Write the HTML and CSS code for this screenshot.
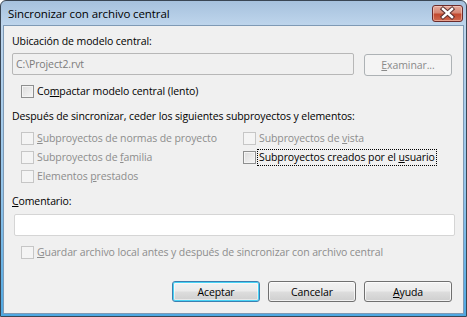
FILE: index.html
```html
<!DOCTYPE html>
<html lang="es">
  <head>
    <meta charset="UTF-8" />
    <title>Sincronizar con archivo central</title>
    <link rel="stylesheet" href="styles.css">
  </head>
  <body>
    <div class="window">
      <div class="titlebar">
        <span class="title">Sincronizar con archivo central</span>
        <span class="close">
          <svg viewBox="0 0 31 17" width="31" height="17">
            <path d="M11 4 L20 12 M20 4 L11 12" stroke="#5a3030" stroke-width="4.4" stroke-linecap="square" />
            <path d="M11 4 L20 12 M20 4 L11 12" stroke="#fff" stroke-width="2.4" stroke-linecap="square" />
          </svg>
        </span>
      </div>

      <div class="client">
        <div class="label">Ubicación de modelo central:</div>
        <div class="path-row">
          <div class="field disabled">C:\Project2.rvt</div>
          <button class="btn browse" disabled><u>E</u>xaminar...</button>
        </div>

        <div class="check compact"><span class="box"></span><span>Co<u>m</u>pactar modelo central (lento)</span></div>

        <div class="label section">Después de sincronizar, ceder los siguientes subproyectos y elementos:</div>
        <div class="grid">
          <div class="check disabled"><span class="box"></span><span><u>S</u>ubproyectos de normas de proyecto</span></div>
          <div class="check disabled"><span class="box"></span><span>Subproyectos de <u>v</u>ista</span></div>
          <div class="check disabled"><span class="box"></span><span>Subproyectos de <u>f</u>amilia</span></div>
          <div class="check"><span class="box"></span><span class="focus">Subproyectos creados por el <u>u</u>suario</span></div>
          <div class="check disabled"><span class="box"></span><span>Elementos <u>p</u>restados</span></div>
        </div>

        <div class="label comment-label"><u>C</u>omentario:</div>
        <div class="field comment"></div>

        <div class="check disabled save"><span class="box"></span><span><u>G</u>uardar archivo local antes y después de sincronizar con archivo central</span></div>

        <div class="actions">
          <button class="btn default">Aceptar</button>
          <button class="btn">Cancelar</button>
          <button class="btn"><u>A</u>yuda</button>
        </div>
      </div>
    </div>
  </body>
</html>
```

FILE: styles.css
```css
html, body {
  margin: 0;
  padding: 0;
  background: #fff;
}

body {
  font-family: "Segoe UI", "Open Sans", sans-serif;
  font-size: 10.5px;
  letter-spacing: -0.1px;
  color: #000;
}

.window {
  width: 467px;
  height: 317px;
  box-sizing: border-box;
  border: 1px solid #3a4654;
  border-radius: 6px 6px 0 0;
  background: linear-gradient(to bottom, #a6c1dd 0, #bed5ec 24px, #93c4ea 60%, #4ea8e2 100%);
  padding: 0 2px 2px;
  display: flex;
  flex-direction: column;
}

.titlebar {
  height: 24px;
  display: flex;
  align-items: flex-start;
  justify-content: space-between;
  padding-left: 5px;
}

.title {
  font-size: 11.5px;
  letter-spacing: -0.1px;
  line-height: 16px;
  margin-top: 5px;
  color: #000;
}

.close {
  width: 31px;
  height: 17px;
  margin-top: 4px;
  margin-right: 1px;
  box-sizing: border-box;
  border: 1px solid #6b2b2b;
  border-radius: 3px;
  background: linear-gradient(to bottom, #e4aa9d 0, #d68774 45%, #c2492f 55%, #d06a50 100%);
  box-shadow: inset 0 0 0 1px rgba(255, 220, 210, 0.5);
  display: flex;
}

.close svg {
  margin: -1px;
}

.client {
  flex: 1;
  background: #f0f0f0;
  border: 1px solid #7f9ab5;
  padding: 8px 10px 0 8px;
  display: flex;
  flex-direction: column;
  align-items: flex-start;
}

.label {
  line-height: 15px;
  height: 15px;
}

.section {
  margin-top: 10px;
}

.path-row {
  display: flex;
  align-items: flex-start;
  margin-top: 4px;
}

.field {
  box-sizing: border-box;
  height: 22px;
  border: 1px solid #abadb3;
  border-radius: 2px;
  background: #fff;
  padding: 0 3px;
  line-height: 20px;
}

.field.disabled {
  width: 342px;
  background: #f0f0f0;
  border-color: #b7b7b7;
  color: #7b7b7b;
}

.btn {
  font: inherit;
  letter-spacing: inherit;
  width: 88px;
  height: 22px;
  box-sizing: border-box;
  padding: 0;
  border: 1px solid #707070;
  border-radius: 3px;
  color: #000;
  background: linear-gradient(to bottom, #f2f2f2 0, #ebebeb 48%, #dddddd 52%, #cfcfcf 100%);
  box-shadow: inset 0 0 0 1px rgba(255, 255, 255, 0.7);
}

.browse {
  margin-left: 10px;
  margin-top: 1px;
  border-color: #adb2b5;
  background: #f4f4f4;
  color: #8a8a8a;
  box-shadow: none;
}

.btn.default {
  border-color: #3c7fb1;
  box-shadow: inset 0 0 0 1px #48d3f5, inset 0 0 0 2px rgba(255, 255, 255, 0.5);
}

.check {
  display: flex;
  align-items: center;
  height: 15px;
  line-height: 15px;
  white-space: nowrap;
}

.box {
  width: 13px;
  height: 13px;
  box-sizing: border-box;
  border: 1px solid #8e8f8f;
  background: linear-gradient(135deg, #dcdcdc 0, #f6f6f6 100%);
  box-shadow: inset 0 0 0 1px #f4f4f4;
  margin-right: 3px;
  flex: none;
}

.check.disabled {
  color: #8d8d8d;
}

.check.disabled .box {
  border-color: #c6c6c6;
  background: #f4f4f4;
  box-shadow: none;
}

.compact {
  margin-top: 8px;
  margin-left: 9px;
}

.grid {
  margin-top: 4px;
  margin-left: 9px;
  display: grid;
  grid-template-columns: 222px 222px;
  grid-template-rows: 20px 19px 19px;
  align-items: center;
}

.focus {
  outline: 1px dotted #000;
  outline-offset: 0;
  margin-left: -1px;
  padding: 0 1px;
}

.comment-label {
  margin-top: 8px;
}

.field.comment {
  width: 441px;
  margin-top: 5px;
  margin-left: 2px;
  border-color: #d5d5d5;
}

.save {
  margin-top: 9px;
  margin-left: 9px;
}

.actions {
  align-self: flex-end;
  display: flex;
  gap: 8px;
  margin-top: 21px;
  margin-right: 1px;
}

.actions .btn {
  height: 21px;
}
```
